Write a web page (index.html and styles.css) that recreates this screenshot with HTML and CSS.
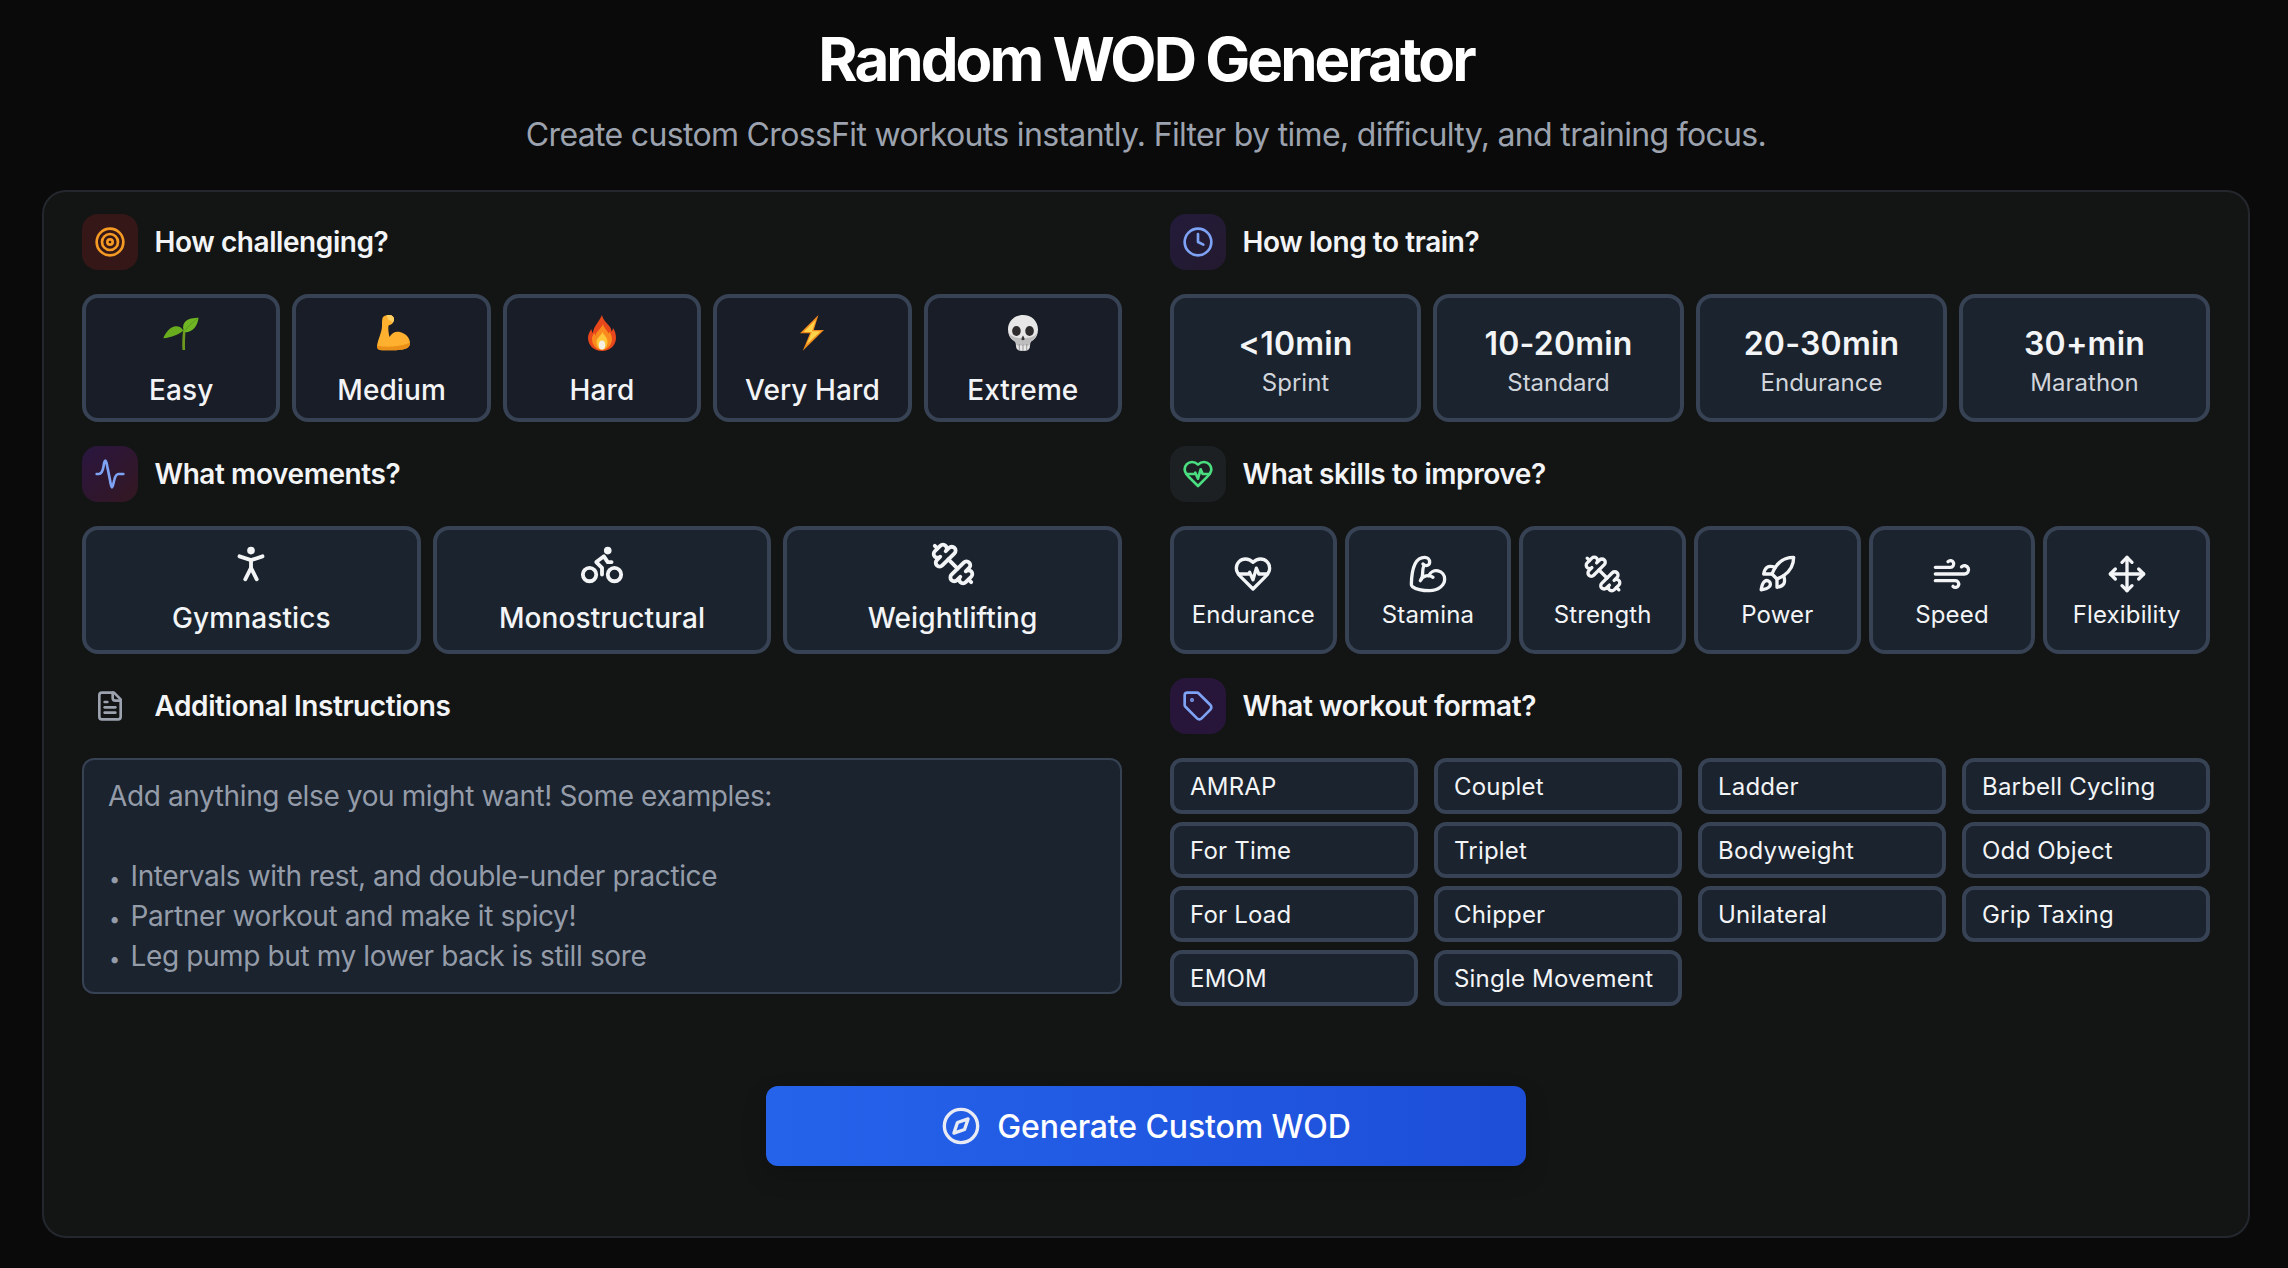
FILE: index.html
```html
<!DOCTYPE html>
<html lang="en">
<head>
<meta charset="utf-8">
<title>Random WOD Generator</title>
<link rel="stylesheet" href="styles.css">
</head>
<body>
<svg class="defs" width="0" height="0" aria-hidden="true">
  <defs>
    <symbol id="i-dumbbell" viewBox="0 0 24 24"><path d="M14.4 14.4 9.6 9.6"/><path d="M18.657 21.485a2 2 0 1 1-2.829-2.828l-1.767 1.768a2 2 0 1 1-2.829-2.829l6.364-6.364a2 2 0 1 1 2.829 2.829l-1.768 1.767a2 2 0 1 1 2.828 2.829z"/><path d="m21.5 21.5-1.4-1.4"/><path d="M3.9 3.9 2.5 2.5"/><path d="M6.404 12.768a2 2 0 1 1-2.829-2.829l1.768-1.767a2 2 0 1 1-2.828-2.829l2.828-2.828a2 2 0 1 1 2.829 2.828l1.767-1.768a2 2 0 1 1 2.829 2.829z"/></symbol>
    <symbol id="i-heart" viewBox="0 0 24 24"><path d="M19 14c1.49-1.46 3-3.21 3-5.5A5.5 5.5 0 0 0 16.5 3c-1.76 0-3 .5-4.5 2-1.5-1.5-2.74-2-4.5-2A5.5 5.5 0 0 0 2 8.5c0 2.3 1.5 4.05 3 5.5l7 7Z"/><path d="M3.22 12H9.5l.5-1 2 4.5 2-7 1.5 3.5h5.27"/></symbol>
  </defs>
</svg>
<main class="page">
  <header class="hero">
    <h1 class="hero-title">Random WOD Generator</h1>
    <p class="hero-sub">Create custom CrossFit workouts instantly. Filter by time, difficulty, and training focus.</p>
  </header>

  <section class="panel">
    <div class="panel-grid">

      <div class="group">
        <div class="group-head">
          <span class="badge badge-red"><svg class="ico ico-sm c-orange" viewBox="0 0 24 24"><circle cx="12" cy="12" r="10"/><circle cx="12" cy="12" r="6"/><circle cx="12" cy="12" r="2"/></svg></span>
          <h2 class="group-title">How challenging?</h2>
        </div>
        <div class="opts opts-5">
          <button class="opt opt-level">
            <svg class="emoji" viewBox="0 0 36 36"><path d="M19.500 35c-.6-6 0-14 .5-20l2.600.4c-.5 6-.8 13-.5 19.600z" fill="#6d9a1e"/><path d="M.3 23.300C3 16.500 8 11.500 13 11.300c3-.1 6 1.500 7.300 4.200-4 3.800-12 7-20 7.800z" fill="#69ad1f"/><path d="M21.300 17C18 10 22 5 28 3.500c3-.6 5.500-.8 7.500-.8-.5 5.300-3 11-8 13.200-2 .9-4.500 1.500-6.200 1.100z" fill="#6fb524"/><path d="M22 15.500c3-4 7-8 12.500-12" stroke="#4f8f16" stroke-width=".7" fill="none"/></svg>
            <span class="opt-label">Easy</span>
          </button>
          <button class="opt opt-level">
            <svg class="emoji" viewBox="-3 0 36 36"><path d="M5.500 3C6 1 9 0 12 0c3 0 5.500 2 5 5-.5 3-2.500 5-5.500 5.500-.5 3.500 0 7.500 1 11.500 2.500-4.500 6.500-6 10.500-5 6 1.500 10 6 10 11 0 4-3 5.500-7 6.500-7 1-17 1-23 .5-2-.5-3-1.500-3-4 1-7 5-14 5-20 0-3 0-6 .5-8z" fill="#ffb02e"/><path d="M.1 30.500c6 1.500 13 1.500 20 .5 5-.7 9.500-1.500 12.800-3.500l.1.500c0 4-3 5.500-7 6.500-7 1-17 1-23 .5-2-.5-3-1.500-3-4z" fill="#ea8f18"/><path d="M12 0c3 0 5.500 2 5 5-.2 1-.7 2-1.500 3-1-2-2.500-3-4-3L9.500.3c.8-.2 1.600-.3 2.500-.3z" fill="#ffcf62"/></svg>
            <span class="opt-label">Medium</span>
          </button>
          <button class="opt opt-level">
            <svg class="emoji emoji-fire" viewBox="0 0 28 36"><path d="M14 0c1 5 5 8 8 12 1 1.500 1.500 3 1.500 4.500 1-1 1.500-2.500 1.500-3.500 2 3 3 6.500 3 10 0 7-6 13-14 13S0 30 0 23c0-3.500 1.500-6.500 3.500-9 0 1.500.5 3 1.500 4C5 12 11 7 14 0z" fill="#e8471c"/><path d="M15 9c.5 3.500 4 6 5.500 9.500.5-.5.8-1 1-2 1.500 2.500 2.500 5 2.500 7.500 0 6-4.500 11-10 11S4 30 4 24c0-2.500 1-4.500 2.500-6 0 1 .3 2 1 2.700C8 16.500 13 14 15 9z" fill="#fb8a1e"/><path d="M14.500 17c.5 2.500 5 5 5 10 0 4-2.500 7.500-5.500 7.500S8.500 31 8.500 27c0-4 4.500-6 6-10z" fill="#ffc83a"/><ellipse cx="14" cy="30" rx="3.200" ry="4.600" fill="#f4f0e6"/></svg>
            <span class="opt-label">Hard</span>
          </button>
          <button class="opt opt-level">
            <svg class="emoji emoji-bolt" viewBox="0 0 24 36"><polygon points="18.400,0 0,18.300 10,18.300 2.800,35.700 24,15 13.800,15" fill="#f08a1c"/><polygon points="16,4.500 3.500,17 11.800,17 6.500,29.500 20.800,16.200 12,16.200" fill="#ffd34a"/></svg>
            <span class="opt-label">Very Hard</span>
          </button>
          <button class="opt opt-level">
            <svg class="emoji emoji-skull" viewBox="0 0 32 36" preserveAspectRatio="none"><path d="M16 0C7 0 0 6 0 14.500c0 5 2.200 8.500 5 10.500.7.500 2.500 1.200 3 2.500.3 1 .4 2.500.8 5 .5 2.500 3 3.500 7.200 3.500s6.700-1 7.200-3.500c.4-2.500.5-4 .8-5 .5-1.300 2.300-2 3-2.500 2.800-2 5-5.500 5-10.500C32 6 25 0 16 0z" fill="#e7e7e7"/><path d="M1 18c1 3.500 2.500 5.500 4.500 7 .8.500 2.500 1.200 3 2.500l.5 3h14l.5-3c.5-1.300 2.200-2 3-2.500 2-1.500 3.500-3.500 4.500-7-3 4-7 5-15 5s-12-1-15-5z" fill="#bdbdbd"/><ellipse cx="9" cy="16" rx="4.600" ry="5" fill="#2f2c2d"/><ellipse cx="23" cy="16" rx="4.600" ry="5" fill="#2f2c2d"/><path d="M16 20.500c1.200 1.500 2 3.500 1.500 4.200-.5.600-2.500.6-3 0-.5-.7.300-2.700 1.500-4.200z" fill="#3a3738"/><path d="M12 29v6M16 29.500V36M20 29v6" stroke="#8f8f8f" stroke-width="1" fill="none"/></svg>
            <span class="opt-label">Extreme</span>
          </button>
        </div>
      </div>

      <div class="group">
        <div class="group-head">
          <span class="badge badge-indigo"><svg class="ico ico-sm c-blue" viewBox="0 0 24 24"><circle cx="12" cy="12" r="10"/><polyline points="12 6 12 12 16 14"/></svg></span>
          <h2 class="group-title">How long to train?</h2>
        </div>
        <div class="opts opts-4">
          <button class="opt opt-time"><span class="time-value">&lt;10min</span><span class="time-name">Sprint</span></button>
          <button class="opt opt-time"><span class="time-value">10-20min</span><span class="time-name">Standard</span></button>
          <button class="opt opt-time"><span class="time-value">20-30min</span><span class="time-name">Endurance</span></button>
          <button class="opt opt-time"><span class="time-value">30+min</span><span class="time-name">Marathon</span></button>
        </div>
      </div>

      <div class="group">
        <div class="group-head">
          <span class="badge badge-plum"><svg class="ico ico-sm c-blue" viewBox="0 0 24 24"><path d="M2 12h1.500c2 0 3-1.500 3.700-6 .4-2.700.9-4 1.300-4 .6 0 1 1.500 1.500 4.500l2 10c.4 2.700.9 5.500 1.500 5.500.7 0 1-3 1.700-5.500.7-2.800 1.800-4.500 3.300-4.500H22"/></svg></span>
          <h2 class="group-title">What movements?</h2>
        </div>
        <div class="opts opts-3">
          <button class="opt opt-move">
            <svg class="ico ico-lg" viewBox="0 0 24 24"><circle cx="12" cy="5" r="1"/><path d="m9 20 3-6 3 6"/><path d="m6 8 6 2 6-2"/><path d="M12 10v4"/></svg>
            <span class="opt-label">Gymnastics</span>
          </button>
          <button class="opt opt-move">
            <svg class="ico ico-lg" viewBox="0 0 24 24"><circle cx="18.500" cy="17.500" r="3.500"/><circle cx="5.500" cy="17.500" r="3.500"/><circle cx="15" cy="5" r="1"/><path d="M12 17.500V14l-3-3 4-3 2 3h2"/></svg>
            <span class="opt-label">Monostructural</span>
          </button>
          <button class="opt opt-move">
            <svg class="ico ico-lg"><use href="#i-dumbbell"/></svg>
            <span class="opt-label">Weightlifting</span>
          </button>
        </div>
      </div>

      <div class="group">
        <div class="group-head">
          <span class="badge badge-slate"><svg class="ico ico-sm c-green"><use href="#i-heart"/></svg></span>
          <h2 class="group-title">What skills to improve?</h2>
        </div>
        <div class="opts opts-6">
          <button class="opt opt-skill"><svg class="ico ico-md"><use href="#i-heart"/></svg><span class="skill-label">Endurance</span></button>
          <button class="opt opt-skill"><svg class="ico ico-md" viewBox="0 0 24 24"><path d="M12.409 13.017A5 5 0 0 1 22 15c0 3.866-4 7-9 7-4.077 0-8.153-.82-10.371-2.462-.426-.316-.631-.832-.62-1.362C2.118 12.723 2.627 2 10 2a3 3 0 0 1 3 3 2 2 0 0 1-2 2c-1.105 0-1.64-.444-2-1"/><path d="M15 14a5 5 0 0 0-7.584 2"/><path d="M9.964 6.825C8.019 7.977 9.500 13 8 15"/></svg><span class="skill-label">Stamina</span></button>
          <button class="opt opt-skill"><svg class="ico ico-md"><use href="#i-dumbbell"/></svg><span class="skill-label">Strength</span></button>
          <button class="opt opt-skill"><svg class="ico ico-md" viewBox="0 0 24 24"><path d="M4.500 16.500c-1.500 1.260-2 5-2 5s3.740-.5 5-2c.71-.84.7-2.130-.09-2.910a2.180 2.180 0 0 0-2.910-.09z"/><path d="m12 15-3-3a22 22 0 0 1 2-3.950A12.880 12.880 0 0 1 22 2c0 2.720-.78 7.500-6 11a22.350 22.350 0 0 1-4 2z"/><path d="M9 12H4s.55-3.030 2-4c1.620-1.080 5 0 5 0"/><path d="M12 15v5s3.030-.55 4-2c1.080-1.620 0-5 0-5"/></svg><span class="skill-label">Power</span></button>
          <button class="opt opt-skill"><svg class="ico ico-md" viewBox="0 0 24 24"><path d="M17.700 7.700a2.500 2.500 0 1 1 1.800 4.300H2"/><path d="M9.600 4.600A2 2 0 1 1 11 8H2"/><path d="M12.600 19.400A2 2 0 1 0 14 16H2"/></svg><span class="skill-label">Speed</span></button>
          <button class="opt opt-skill"><svg class="ico ico-md" viewBox="0 0 24 24"><path d="M12 2v20"/><path d="m15 19-3 3-3-3"/><path d="m19 9 3 3-3 3"/><path d="M2 12h20"/><path d="m5 9-3 3 3 3"/><path d="m9 5 3-3 3 3"/></svg><span class="skill-label">Flexibility</span></button>
        </div>
      </div>

      <div class="group">
        <div class="group-head">
          <span class="badge badge-none"><svg class="ico ico-sm c-gray" viewBox="0 0 24 24"><path d="M15 2H6a2 2 0 0 0-2 2v16a2 2 0 0 0 2 2h12a2 2 0 0 0 2-2V7Z"/><path d="M14 2v4a2 2 0 0 0 2 2h4"/><path d="M10 9H8"/><path d="M16 13H8"/><path d="M16 17H8"/></svg></span>
          <h2 class="group-title">Additional Instructions</h2>
        </div>
        <div class="notes">Add anything else you might want! Some examples:

<span class="bullet">•</span> Intervals with rest, and double-under practice
<span class="bullet">•</span> Partner workout and make it spicy!
<span class="bullet">•</span> Leg pump but my lower back is still sore</div>
      </div>

      <div class="group">
        <div class="group-head">
          <span class="badge badge-violet"><svg class="ico ico-sm c-blue" viewBox="0 0 24 24"><path d="M12.586 2.586A2 2 0 0 0 11.172 2H4a2 2 0 0 0-2 2v7.172a2 2 0 0 0 .586 1.414l8.704 8.704a2.426 2.426 0 0 0 3.420 0l6.580-6.580a2.426 2.426 0 0 0 0-3.420z"/><circle cx="7.500" cy="7.500" r=".5" fill="currentColor"/></svg></span>
          <h2 class="group-title">What workout format?</h2>
        </div>
        <div class="chips">
          <button class="chip">AMRAP</button>
          <button class="chip">Couplet</button>
          <button class="chip">Ladder</button>
          <button class="chip">Barbell Cycling</button>
          <button class="chip">For Time</button>
          <button class="chip">Triplet</button>
          <button class="chip">Bodyweight</button>
          <button class="chip">Odd Object</button>
          <button class="chip">For Load</button>
          <button class="chip">Chipper</button>
          <button class="chip">Unilateral</button>
          <button class="chip">Grip Taxing</button>
          <button class="chip">EMOM</button>
          <button class="chip">Single Movement</button>
        </div>
      </div>

    </div>

    <div class="cta-row">
      <button class="cta">
        <svg class="ico ico-cta" viewBox="0 0 24 24"><circle cx="12" cy="12" r="10"/><path d="m16.240 7.760-2.120 6.360-6.360 2.120 2.120-6.360 6.360-2.120z"/></svg>
        <span>Generate Custom WOD</span>
      </button>
    </div>
  </section>
</main>
</body>
</html>
```

FILE: styles.css
```css
* { box-sizing: border-box; }

html, body { margin: 0; padding: 0; }

body {
  width: 2288px;
  height: 1268px;
  overflow: hidden;
  background: #0a0a0a;
  color: #f3f4f6;
  font-family: Inter, "Liberation Sans", sans-serif;
}

.defs { position: absolute; }

.page { padding: 0 38px 0 42px; }

.hero {
  height: 190px;
  padding-top: 23px;
  text-align: center;
}

.hero-title {
  margin: 0;
  font-size: 60px;
  line-height: 72px;
  font-weight: 700;
  letter-spacing: -2.95px;
  color: #fff;
}

.hero-sub {
  margin: 18px 0 0;
  font-size: 32px;
  line-height: 44px;
  font-weight: 400;
  letter-spacing: -0.67px;
  color: #9ca3af;
}

.panel {
  height: 1048px;
  border: 2px solid #24282e;
  border-radius: 24px;
  background: #131515;
  padding: 22px 38px 0;
}

.panel-grid {
  display: grid;
  grid-template-columns: 1040px 1040px;
  column-gap: 48px;
  row-gap: 24px;
}

.group-head {
  display: flex;
  align-items: center;
  gap: 16.5px;
  height: 56px;
  margin-bottom: 24px;
}

.group-title {
  margin: 0;
  font-size: 28px;
  line-height: 40px;
  font-weight: 600;
  letter-spacing: -0.42px;
  color: #f3f4f6;
}

.badge {
  flex: none;
  display: flex;
  align-items: center;
  justify-content: center;
  width: 56px;
  height: 56px;
  border-radius: 16px;
}

.badge-red { background: #351718; }
.badge-indigo { background: linear-gradient(135deg, #221b3a, #241a2f); }
.badge-plum { background: linear-gradient(135deg, #2a1640, #331720); }
.badge-slate { background: #1c2022; }
.badge-violet { background: #27163a; }
.badge-none { background: transparent; }

.ico {
  display: block;
  fill: none;
  stroke: currentColor;
  stroke-width: 2;
  stroke-linecap: round;
  stroke-linejoin: round;
}

.ico-sm { width: 32px; height: 32px; }
.ico-md { width: 40px; height: 40px; }
.ico-lg { width: 46px; height: 46px; }
.ico-cta { width: 40px; height: 40px; color: #e8ebf3; }

.c-orange { color: #f59a23; }
.c-blue { color: #7ea3f5; }
.c-green { color: #4ade80; }
.c-gray { color: #9ca3af; }

.opts {
  display: grid;
  gap: 12px;
  height: 128px;
}

.opts-3 { grid-template-columns: repeat(3, 1fr); }
.opts-4 { grid-template-columns: repeat(4, 1fr); }
.opts-5 { grid-template-columns: repeat(5, 1fr); }
.opts-6 { grid-template-columns: repeat(6, 1fr); gap: 8px; }

.opt {
  display: flex;
  flex-direction: column;
  align-items: center;
  margin: 0;
  border: 4px solid #374254;
  border-radius: 16px;
  background: #1a232e;
  color: #f3f4f6;
  font-family: inherit;
  padding: 0;
}

.opt-level {
  background: #191d27;
  padding-top: 17px;
}

.emoji { display: block; width: 36px; height: 36px; flex: none; }
.emoji-fire { width: 28px; }
.emoji-bolt { width: 24px; }
.emoji-skull { width: 30px; }

.opt-level .opt-label { margin-top: 19px; }

.opt-label {
  font-size: 28px;
  line-height: 40px;
  font-weight: 500;
  letter-spacing: 0.1px;
}

.opt-move { padding-top: 11px; }
.opt-move .opt-label { margin-top: 11px; }

.opt-skill { padding-top: 24px; }

.skill-label {
  margin-top: 5px;
  font-size: 24px;
  line-height: 32px;
  font-weight: 400;
  letter-spacing: 0.15px;
}

.opt-time { padding-top: 26px; }

.time-value {
  font-size: 32px;
  line-height: 40px;
  font-weight: 600;
  letter-spacing: 0.2px;
}

.time-name {
  margin-top: 3px;
  font-size: 24px;
  line-height: 32px;
  font-weight: 400;
  color: #d1d5db;
}

.notes {
  height: 236px;
  border: 2px solid #374254;
  border-radius: 12px;
  background: #1a232e;
  padding: 16px 24px;
  font-size: 28px;
  line-height: 40px;
  letter-spacing: -0.38px;
  color: #959ca9;
  white-space: pre-line;
}

.bullet {
  display: inline-block;
  width: 13px;
  margin-right: 2px;
  font-size: 20px;
  line-height: 1;
  text-align: center;
}

.chips {
  display: grid;
  grid-template-columns: repeat(4, 248px);
  column-gap: 16px;
  row-gap: 8px;
}

.chip {
  height: 56px;
  margin: 0;
  padding: 0 16px;
  border: 4px solid #374254;
  border-radius: 12px;
  background: #1a232e;
  color: #f3f4f6;
  font-family: inherit;
  font-size: 24px;
  font-weight: 400;
  letter-spacing: 0.2px;
  text-align: left;
}

.cta-row {
  display: flex;
  justify-content: center;
  margin-top: 80px;
}

.cta {
  display: flex;
  align-items: center;
  justify-content: center;
  gap: 16px;
  width: 760px;
  height: 80px;
  border: 0;
  border-radius: 12px;
  background: linear-gradient(90deg, #2563eb, #1d4ed8);
  box-shadow: 0 10px 24px rgba(0, 0, 0, 0.18);
  color: #fff;
  font-family: inherit;
  font-size: 32px;
  font-weight: 500;
  letter-spacing: -0.1px;
}
```
